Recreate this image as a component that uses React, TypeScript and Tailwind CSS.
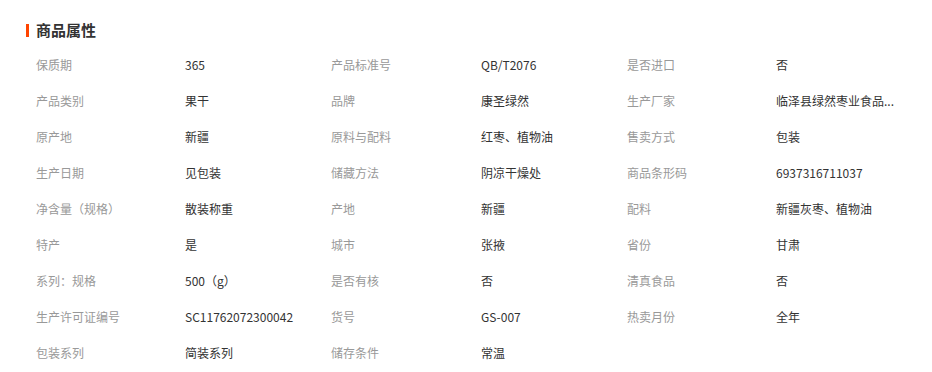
import React from "react";

const rows: [string, string, string, string, string, string][] = [
  ["保质期", "365", "产品标准号", "QB/T2076", "是否进口", "否"],
  ["产品类别", "果干", "品牌", "康圣绿然", "生产厂家", "临泽县绿然枣业食品..."],
  ["原产地", "新疆", "原料与配料", "红枣、植物油", "售卖方式", "包装"],
  ["生产日期", "见包装", "储藏方法", "阴凉干燥处", "商品条形码", "6937316711037"],
  ["净含量（规格）", "散装称重", "产地", "新疆", "配料", "新疆灰枣、植物油"],
  ["特产", "是", "城市", "张掖", "省份", "甘肃"],
  ["系列：规格", "500（g）", "是否有核", "否", "清真食品", "否"],
  ["生产许可证编号", "SC11762072300042", "货号", "GS-007", "热卖月份", "全年"],
  ["包装系列", "简装系列", "储存条件", "常温", "", ""],
];

export default function App() {
  return (
    <div
      className="w-[932px] h-[372px] bg-white pt-[20px] overflow-hidden"
      style={{ fontFamily: '"Noto Sans CJK SC", "Noto Sans", sans-serif' }}
    >
      {/* Title */}
      <div className="flex items-center h-[20px] pl-[26px]">
        <span className="w-[3px] h-[13px] bg-[#ff4400]" />
        <span className="ml-[7px] text-[15px] font-bold text-[#333]">商品属性</span>
      </div>

      {/* Attributes */}
      <div className="mt-[7px] pl-[36px] grid grid-cols-[149px_146px_150px_146px_149px_140px] text-[12px]">
        {rows.map((r, i) => (
          <React.Fragment key={i}>
            {r.map((cell, j) => (
              <div
                key={j}
                className={`h-9 leading-9 whitespace-nowrap ${j % 2 === 0 ? "text-[#999]" : "text-[#333]"}`}
              >
                {cell}
              </div>
            ))}
          </React.Fragment>
        ))}
      </div>
    </div>
  );
}
